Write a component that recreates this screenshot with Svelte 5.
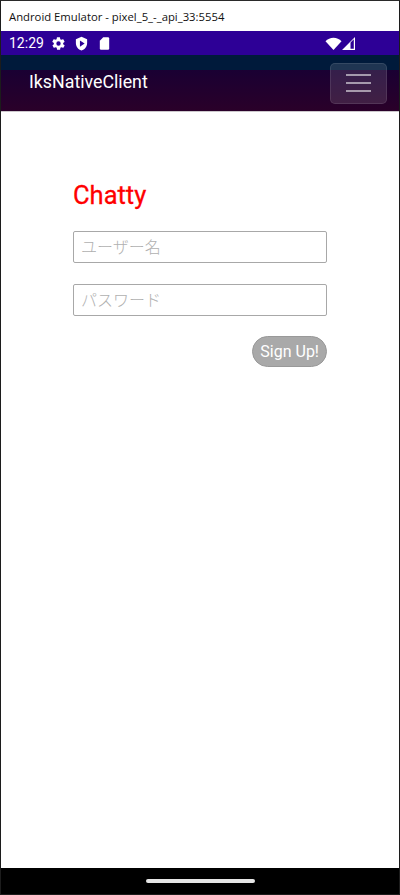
<script lang="ts">
  const fields = ['ユーザー名', 'パスワード'];
</script>

<div class="window">
  <div class="titlebar">Android Emulator - pixel_5_-_api_33:5554</div>
  <div class="screen">
    <div class="statusbar">
      <span class="time">12:29</span>
      <svg class="ic" width="15" height="15" viewBox="0 0 24 24"><path fill="#fff" d="M19.400 13a7.500 7.500 0 0 0 0-2l2.100-1.600a.5.5 0 0 0 .1-.6l-2-3.500a.5.5 0 0 0-.6-.2l-2.500 1a7.300 7.300 0 0 0-1.700-1l-.4-2.700a.5.5 0 0 0-.5-.4h-4a.5.5 0 0 0-.5.4l-.4 2.700a7.300 7.300 0 0 0-1.700 1l-2.500-1a.5.5 0 0 0-.6.2l-2 3.500a.5.5 0 0 0 .1.6L4.600 11a7.500 7.500 0 0 0 0 2l-2.100 1.600a.5.5 0 0 0-.1.6l2 3.500c.1.2.4.3.6.2l2.500-1c.5.4 1.100.7 1.700 1l.4 2.700c0 .2.2.4.5.4h4c.3 0 .5-.2.5-.4l.4-2.700c.6-.3 1.200-.6 1.700-1l2.500 1c.2.1.5 0 .6-.2l2-3.500a.5.5 0 0 0-.1-.6zM12 15.500a3.500 3.500 0 1 1 0-7 3.500 3.500 0 0 1 0 7z"/></svg>
      <svg class="ic" width="15" height="15" viewBox="0 0 24 24"><path fill="#fff" fill-rule="evenodd" d="M12 1 3 5v6c0 5.500 3.800 10.700 9 12 5.200-1.300 9-6.500 9-12V5zM9.500 7v10l7.500-5z"/></svg>
      <svg class="ic" width="15" height="15" viewBox="0 0 24 24"><path fill="#fff" d="M10 2 4.500 7.500V20a2 2 0 0 0 2 2h11a2 2 0 0 0 2-2V4a2 2 0 0 0-2-2z"/></svg>
      <span class="spacer"></span>
      <svg class="wifi" width="17" height="13" viewBox="0 0 16 13"><path fill="#fff" d="M0 4.200C2 2 5 .8 8 .8s6 1.200 8 3.400L8 13z"/></svg>
      <svg class="signal" width="13" height="13" viewBox="0 0 13 13"><path fill="#fff" d="M0 13 13 0v13zM8.500 5.500v6.300h3.300V2.200z" fill-rule="evenodd"/></svg>
    </div>
    <header class="appbar">
      <span class="brand">IksNativeClient</span>
      <button class="toggler" aria-label="menu">
        <span></span><span></span><span></span>
      </button>
    </header>
    <main class="content">
      <h1>Chatty</h1>
      {#each fields as f}
        <input type="text" placeholder={f} />
      {/each}
      <div class="actions">
        <button class="signup">Sign Up!</button>
      </div>
    </main>
    <div class="navbar"><span class="handle"></span></div>
  </div>
</div>

<style>
  :global(body) { margin: 0; background: #fff; }
  .window {
    width: 400px; height: 895px; box-sizing: border-box;
    display: flex; flex-direction: column;
    border: 1px solid #1c1c1c; border-top-color: #2a2a2a;
    font-family: Roboto, sans-serif; overflow: hidden;
  }
  .titlebar {
    height: 30px; flex: none; background: #fff; color: #111;
    font: 11.300px/31px "Open Sans", sans-serif; padding-left: 8px;
  }
  .screen { flex: 1; display: flex; flex-direction: column; min-height: 0; }
  .statusbar {
    height: 24px; flex: none; background: #2d0096; color: #fff;
    display: flex; align-items: center; padding: 0 44px 0 8px;
    font-size: 14px;
  }
  .time { margin-right: 7px; }
  .ic { flex: none; margin-right: 8px; }
  .spacer { flex: 1; }
  .appbar {
    height: 57px; flex: none; box-sizing: border-box;
    background: linear-gradient(#001a3b 0 15px, #1a0033 15px, #2a0029 100%);
    border-bottom: 1px solid #ccc8cc;
    display: flex; align-items: center; justify-content: space-between;
    padding: 0 12px 0 28px; color: #fff;
  }
  .brand { font-size: 17.800px; line-height: 24px; padding-bottom: 2px; }
  .toggler {
    width: 57px; height: 41px; padding: 0; border-radius: 5px;
    background: rgba(255,255,255,0.12); border: 1px solid rgba(255,255,255,0.1);
    display: flex; flex-direction: column; justify-content: center; align-items: center; gap: 6px;
  }
  .toggler span { width: 25px; height: 2px; background: rgba(255,255,255,0.55); }
  .content {
    flex: 1; background: #fff; padding: 70px 72px 0;
    display: flex; flex-direction: column;
  }
  h1 {
    margin: 0 0 23px; color: #f00; font-size: 25.500px; font-weight: 400; line-height: 26px;
    -webkit-text-stroke: 0.3px #f00;
  }
  input {
    height: 32px; box-sizing: border-box; width: 100%; margin-bottom: 21px;
    border: 1px solid #a8a8a8; border-radius: 2px; padding: 0 7px 3px;
    font: 300 16px "Noto Sans CJK JP", sans-serif; background: #fff;
  }
  input::placeholder { color: #b0b0b0; }
  .actions { display: flex; justify-content: flex-end; margin-top: -1px; }
  .signup {
    height: 31px; padding: 0 7px 1px; border-radius: 15.500px;
    background: #a9a9a9; border: 1px solid #999; color: #fff;
    font: 16px Roboto, sans-serif;
  }
  .navbar {
    height: 26px; flex: none; background: #000;
    display: flex; justify-content: center; align-items: center;
  }
  .handle { width: 109px; height: 4px; border-radius: 2px; background: #e6e6e6; }
</style>
